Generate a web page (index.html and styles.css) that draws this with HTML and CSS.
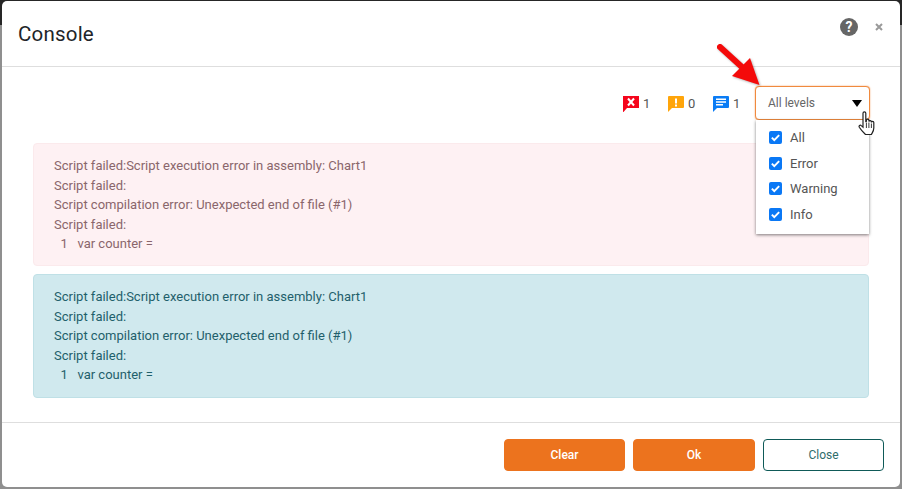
FILE: index.html
```
<!DOCTYPE html>
<html lang="en">
<head>
<meta charset="utf-8">
<title>Console</title>
<link rel="stylesheet" href="styles.css">
</head>
<body>
<div class="modal">
  <header class="head">
    <h1 class="title">Console</h1>
    <div class="head-actions">
      <svg class="help" width="18" height="18" viewBox="0 0 18 18"><circle cx="9" cy="9" r="9" fill="#666"/><text x="9" y="14" text-anchor="middle" class="help-q">?</text></svg>
      <svg class="close-x" width="8" height="8" viewBox="0 0 8 8"><path d="M1 1l6 6M7 1l-6 6" stroke="#9a9a9a" stroke-width="2"/></svg>
    </div>
  </header>
  <main class="body">
    <div class="toolbar">
      <div class="counter">
        <svg width="16" height="16" viewBox="0 0 16 16"><path d="M0 0h16v12H4l-3.500 4H0z" fill="#f5051c"/><path d="M5 2.500l6 7M11 2.500l-6 7" stroke="#fff" stroke-width="2"/></svg>
        <span>1</span>
      </div>
      <div class="counter">
        <svg width="16" height="16" viewBox="0 0 16 16"><path d="M1 0h14a1 1 0 0 1 1 1v10a1 1 0 0 1-1 1H4l-4 4V1a1 1 0 0 1 1-1z" fill="#ffa50a"/><path d="M7 2.500h2v5H7zM7 8.500h2v2H7z" fill="#fff"/></svg>
        <span>0</span>
      </div>
      <div class="counter">
        <svg width="16" height="16" viewBox="0 0 16 16"><path d="M1 0h14a1 1 0 0 1 1 1v10a1 1 0 0 1-1 1H4l-4 4V1a1 1 0 0 1 1-1z" fill="#0a7cf5"/><path d="M3 2.500h10v1.500H3zM3 5.300h10v1.500H3zM3 8.100h7v1.500H3z" fill="#fff"/></svg>
        <span>1</span>
      </div>
      <div class="select-wrap">
        <div class="select"><span>All levels</span><i class="caret"></i></div>
        <ul class="menu">
          <li class="opt"><span class="box"><svg width="16" height="16" viewBox="0 0 16 16"><path d="M3.500 8.200l3 3 6-6.200" fill="none" stroke="#fff" stroke-width="2.400"/></svg></span>All</li>
          <li class="opt"><span class="box"><svg width="16" height="16" viewBox="0 0 16 16"><path d="M3.500 8.200l3 3 6-6.200" fill="none" stroke="#fff" stroke-width="2.400"/></svg></span>Error</li>
          <li class="opt"><span class="box"><svg width="16" height="16" viewBox="0 0 16 16"><path d="M3.500 8.200l3 3 6-6.200" fill="none" stroke="#fff" stroke-width="2.400"/></svg></span>Warning</li>
          <li class="opt"><span class="box"><svg width="16" height="16" viewBox="0 0 16 16"><path d="M3.500 8.200l3 3 6-6.200" fill="none" stroke="#fff" stroke-width="2.400"/></svg></span>Info</li>
        </ul>
      </div>
    </div>
    <div class="alert alert-danger">
      <div>Script failed:Script execution error in assembly: Chart1</div>
      <div>Script failed:</div>
      <div>Script compilation error: Unexpected end of file (#1)</div>
      <div>Script failed:</div>
      <div class="code">  1   var counter =</div>
    </div>
    <div class="alert alert-info">
      <div>Script failed:Script execution error in assembly: Chart1</div>
      <div>Script failed:</div>
      <div>Script compilation error: Unexpected end of file (#1)</div>
      <div>Script failed:</div>
      <div class="code">  1   var counter =</div>
    </div>
  </main>
  <footer class="foot">
    <button class="btn btn-primary btn-clear">Clear</button>
    <button class="btn btn-primary btn-ok">Ok</button>
    <button class="btn btn-outline">Close</button>
  </footer>
</div>
<svg class="arrow" width="56" height="52" viewBox="0 0 56 52"><path d="M7 7 L30 28" stroke="#f40a0a" stroke-width="6" stroke-linecap="round"/><path d="M46.500 45 L19 36 L37 18 Z" fill="#f40a0a"/></svg>
<svg class="cursor" width="19" height="25" viewBox="0 0 19 25"><path d="M5 2.200a1.400 1.400 0 0 1 2.800 0V10.500l.6-.2V9a1.300 1.300 0 0 1 2.500 0v1.600a1.300 1.300 0 0 1 2.500 0v1a1.200 1.200 0 0 1 2.400 0V17c0 3-1.400 4.500-2.400 6.500H7.500C5.500 21.500 3 19 1.300 16.200c-.8-1.400.8-2.800 2-1.600L5 16.200z" fill="#fff" stroke="#222" stroke-width="1.200"/><path d="M8.400 11.500v5.500M10.900 11.500v5.500M13.400 12.500v4.500" stroke="#222" stroke-width=".9"/></svg>
</body>
</html>
```
FILE: styles.css
```
* { box-sizing: border-box; }
html, body { margin: 0; height: 100%; }
body {
  width: 902px;
  height: 489px;
  overflow: hidden;
  position: relative;
  background: linear-gradient(#262626 25px, #8f8f8f 25px);
  font-family: Roboto, "Liberation Sans", sans-serif;
  color: #212529;
}
.modal {
  width: 898px;
  height: 486px;
  margin: 1px 0 0 2px;
  background: #fff;
  border-radius: 5px;
  display: flex;
  flex-direction: column;
}
.head {
  height: 66px;
  flex: none;
  display: flex;
  justify-content: space-between;
  padding: 0 17px 0 16px;
  border-bottom: 1px solid #dedede;
}
.title { margin: 20px 0 0; font-size: 20.500px; font-weight: 400; line-height: 26px; letter-spacing: .2px; }
.head-actions { display: flex; align-items: flex-start; gap: 17px; padding-top: 17px; }
.help { display: block; }
.help-q { font: 700 14px Roboto, sans-serif; fill: #fff; }
.close-x { display: block; margin-top: 5px; }
.body { flex: 1; padding: 19px 31px 0; min-height: 0; }
.toolbar { display: flex; justify-content: flex-end; align-items: flex-start; height: 57px; }
.counter { display: flex; align-items: center; gap: 4px; height: 34px; margin-right: 17.700px; font-size: 13px; color: #555; }
.counter svg { display: block; margin-top: 1px; }
.counter:nth-child(3) { margin-right: 14.700px; }
.select-wrap { position: relative; width: 115px; flex: none; margin-right: -1px; }
.select {
  height: 34px;
  border: 1px solid #f08a3e;
  box-shadow: 0 0 1.500px #f08a3e;
  border-radius: 4px;
  display: flex;
  align-items: center;
  justify-content: space-between;
  padding: 0 7px 0 12px;
  font-size: 12px;
  color: #666;
  background: #fff;
}
.caret { width: 0; height: 0; border-left: 5px solid transparent; border-right: 5px solid transparent; border-top: 7px solid #000; margin-top: 1px; }
.menu {
  position: absolute;
  z-index: 2;
  top: 34px;
  left: 1px;
  width: 113px;
  height: 114px;
  margin: 0;
  padding: 4.600px 0 0 13px;
  list-style: none;
  background: #fff;
  box-shadow: 0 1px 3px rgba(0,0,0,.5);
  font-size: 13px;
  color: #555;
}
.opt { display: flex; align-items: center; gap: 8px; height: 25.700px; }
.box { width: 13px; height: 13px; border-radius: 2px; background: #0a78f5; display: flex; align-items: center; justify-content: center; }
.box svg { width: 13px; height: 13px; display: block; }
.alert {
  border-radius: 4px;
  font-size: 13px;
  line-height: 19.500px;
  padding: 12.300px 20px 0;
  border: 1px solid;
}
.alert-danger { height: 123px; background: #fef1f3; border-color: #fbeaec; color: #8a666b; margin-bottom: 8px; }
.alert-info { height: 124px; background: #d0e9ee; border-color: #bfe0e6; color: #1f5f6b; }
.code { white-space: pre; }
.foot {
  height: 65px;
  flex: none;
  border-top: 1px solid #dedede;
  display: flex;
  justify-content: flex-end;
  gap: 8px;
  padding: 16px 16px 0 0;
}
.btn { height: 32px; border-radius: 4px; font: 500 12px Roboto, sans-serif; border: 1px solid; }
.btn-primary { background: #ec731e; border-color: #ec731e; color: #fff; }
.btn-clear { width: 121px; }
.btn-ok { width: 122px; }
.btn-outline { width: 121px; background: #fff; border-color: #0f5a58; color: #2f6d6b; font-weight: 400; }
.arrow { position: absolute; left: 713px; top: 40px; filter: drop-shadow(1px 1px 1px rgba(0,0,0,.3)); }
.cursor { position: absolute; left: 858px; top: 111px; z-index: 3; }
```
